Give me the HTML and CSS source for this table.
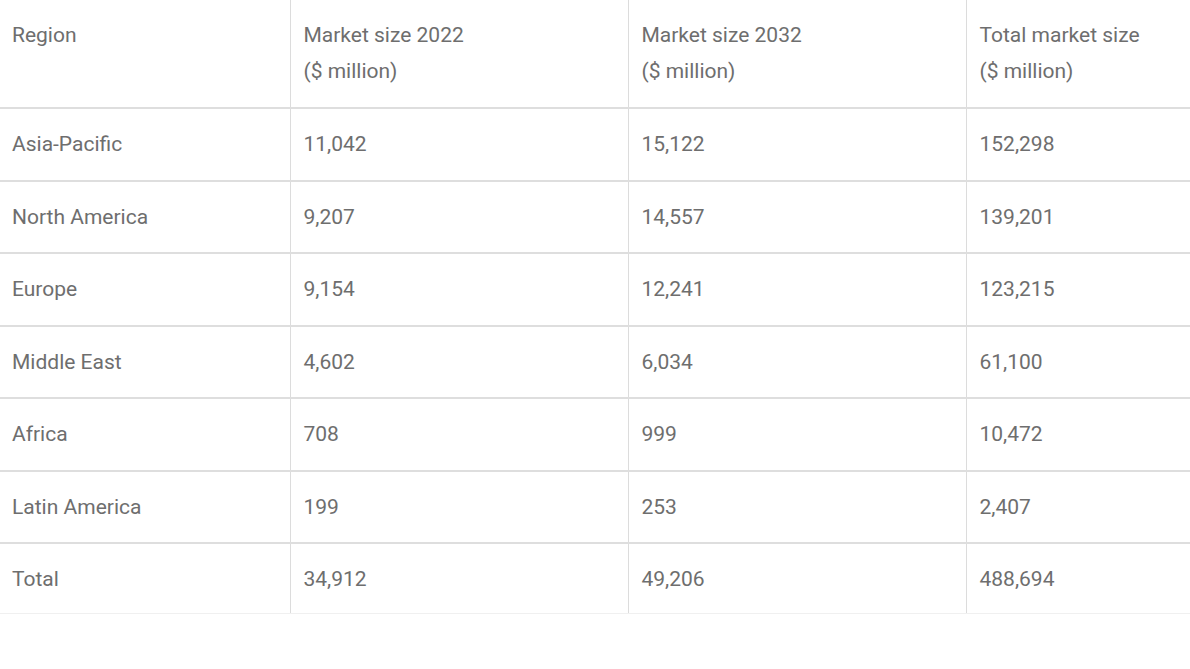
FILE: index.html
```html
<!DOCTYPE html>
<html lang="en">
<head>
<meta charset="utf-8">
<title>Market size by region</title>
<link rel="stylesheet" href="styles.css">
</head>
<body>
<table class="market">
  <colgroup>
    <col class="c1"><col class="c2"><col class="c3"><col class="c4">
  </colgroup>
  <thead>
    <tr>
      <th>Region</th>
      <th>Market size 2022<br>($ million)</th>
      <th>Market size 2032<br>($ million)</th>
      <th>Total market size<br>($ million)</th>
    </tr>
  </thead>
  <tbody>
    <tr><td>Asia-Pacific</td><td>11,042</td><td>15,122</td><td>152,298</td></tr>
    <tr><td>North America</td><td>9,207</td><td>14,557</td><td>139,201</td></tr>
    <tr><td>Europe</td><td>9,154</td><td>12,241</td><td>123,215</td></tr>
    <tr><td>Middle East</td><td>4,602</td><td>6,034</td><td>61,100</td></tr>
    <tr><td>Africa</td><td>708</td><td>999</td><td>10,472</td></tr>
    <tr><td>Latin America</td><td>199</td><td>253</td><td>2,407</td></tr>
    <tr><td>Total</td><td>34,912</td><td>49,206</td><td>488,694</td></tr>
  </tbody>
</table>
</body>
</html>
```

FILE: styles.css
```css
html, body {
  margin: 0;
  padding: 0;
  background: #ffffff;
}
body {
  font-family: Roboto, "Liberation Sans", sans-serif;
  color: #6e6e6e;
}
.market {
  width: 1190px;
  border-collapse: collapse;
  table-layout: fixed;
  font-size: 21px;
}
.c1 { width: 290px; }
.c2 { width: 338px; }
.c3 { width: 338px; }
.c4 { width: 224px; }
.market th,
.market td {
  text-align: left;
  font-weight: 400;
  padding: 0 0 0 13px;
  border-left: 1px solid #dcdcdc;
  border-bottom: 2px solid #dedede;
}
.market th:first-child,
.market td:first-child {
  border-left: none;
  padding-left: 12px;
}
.market th {
  height: 108px;
  box-sizing: border-box;
  line-height: 36px;
  padding-top: 17px;
  vertical-align: top;
}
.market td {
  height: 70.5px;
  line-height: 24px;
  vertical-align: middle;
}
.market tbody tr:last-child td {
  border-bottom: 1px solid #f0f0f0;
  height: 69px;
}
```
